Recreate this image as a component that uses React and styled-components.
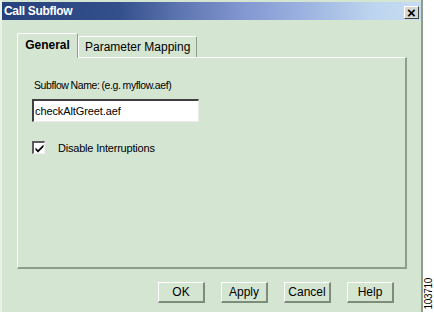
import React from 'react';
import styled, { createGlobalStyle } from 'styled-components';

const GlobalStyle = createGlobalStyle`
    html, body {
        margin: 0;
        padding: 0;
        background: #ffffff;
    }
    body {
        font-family: "Liberation Sans", Arial, sans-serif;
        font-size: 12px;
        color: #000;
    }
`;

function App() {
    return (
        <Page>
            <GlobalStyle />
            <Dialog>
                <TitleBar>
                    <Title>Call Subflow</Title>
                    <CloseButton>×</CloseButton>
                </TitleBar>

                <Body>
                    <Tabs>
                        <Tab active>General</Tab>
                        <Tab>Parameter Mapping</Tab>
                    </Tabs>

                    <Panel>
                        <Label>Subflow Name: (e.g. myflow.aef)</Label>
                        <TextInput>checkAltGreet.aef</TextInput>

                        <CheckRow>
                            <CheckBox>
                                <svg width="9" height="9" viewBox="0 0 9 9">
                                    <path d="M0.5 3.5 L3 6 L8.5 0.5 L8.5 3 L3 8.5 L0.5 6 Z" fill="#000" />
                                </svg>
                            </CheckBox>
                            <span>Disable Interruptions</span>
                        </CheckRow>
                    </Panel>

                    <ButtonRow>
                        <Button>OK</Button>
                        <Button>Apply</Button>
                        <Button>Cancel</Button>
                        <Button>Help</Button>
                    </ButtonRow>
                </Body>
            </Dialog>

            <Side>
                <FigureId>103710</FigureId>
            </Side>
        </Page>
    );
}

export default App;


const Page = styled.div`
    display: flex;
    width: 434px;
    height: 312px;
    overflow: hidden;
`;

const Dialog = styled.div`
    box-sizing: border-box;
    width: 423px;
    height: 312px;
    background: #d4e5d2;
    border-left: 2px solid #e8f2e6;
    border-right: 2px solid #8e9e8c;
    padding-top: 2px;
    display: flex;
    flex-direction: column;
`;

const TitleBar = styled.div`
    height: 18px;
    display: flex;
    align-items: center;
    justify-content: space-between;
    padding: 0 2px 0 2px;
    background: linear-gradient(to right, #26417c 0%, #34508c 28%, #5c74b0 42%, #8498d2 58%, #9cb2e0 72%, #bcd4ee 88%, #c6dcf2 100%);
`;

const Title = styled.span`
    color: #ffffff;
    font-weight: bold;
    font-size: 12px;
    letter-spacing: -0.3px;
`;

const CloseButton = styled.div`
    box-sizing: border-box;
    width: 15px;
    height: 13px;
    margin-top: 3px;
    background: #d4d8d0;
    border-top: 1px solid #ffffff;
    border-left: 1px solid #ffffff;
    border-right: 1px solid #404040;
    border-bottom: 1px solid #404040;
    display: flex;
    align-items: center;
    justify-content: center;
    font-weight: bold;
    font-size: 15px;
    line-height: 1;
`;

const Body = styled.div`
    display: flex;
    flex-direction: column;
    padding: 13px 14px 0 15px;
`;

const Tabs = styled.div`
    display: flex;
    align-items: flex-end;
    height: 25px;
    position: relative;
    z-index: 1;
    margin-bottom: -1px;
`;

const Tab = styled.div`
    box-sizing: border-box;
    height: ${p => (p.active ? '25px' : '21px')};
    padding: ${p => (p.active ? '0 7px' : '0 6px')};
    width: ${p => (p.active ? '61px' : 'auto')};
    display: flex;
    align-items: center;
    justify-content: center;
    background: #d4e5d2;
    font-weight: ${p => (p.active ? 'bold' : 'normal')};
    font-size: 12px;
    border-top: 1px solid #ffffff;
    border-left: 1px solid #ffffff;
    border-right: 1px solid #8e9e8c;
    margin-bottom: ${p => (p.active ? '0' : '1px')};
    padding-bottom: ${p => (p.active ? '3px' : '0')};
    border-radius: 2px 2px 0 0;
`;

const Panel = styled.div`
    box-sizing: border-box;
    width: 390px;
    height: 212px;
    border-top: 1px solid #ffffff;
    border-left: 1px solid #ffffff;
    border-right: 2px solid #8e9e8c;
    border-bottom: 2px solid #8e9e8c;
    padding: 20px 0 0 14px;
    display: flex;
    flex-direction: column;
`;

const Label = styled.div`
    font-size: 10.5px;
    letter-spacing: -0.4px;
    word-spacing: -0.5px;
    padding-left: 2px;
    height: 14px;
    line-height: 14px;
`;

const TextInput = styled.div`
    box-sizing: border-box;
    width: 167px;
    height: 23px;
    margin-top: 7px;
    background: #ffffff;
    border-top: 2px solid #404040;
    border-left: 2px solid #404040;
    border-right: 1px solid #e8eee6;
    border-bottom: 1px solid #e8eee6;
    padding-left: 1px;
    display: flex;
    align-items: center;
    font-size: 11px;
    letter-spacing: -0.1px;
`;

const CheckRow = styled.div`
    display: flex;
    align-items: center;
    margin-top: 19px;
    gap: 13px;
    font-size: 11px;
    letter-spacing: -0.2px;
`;

const CheckBox = styled.div`
    box-sizing: border-box;
    width: 13px;
    height: 13px;
    background: #ffffff;
    border-top: 2px solid #5a5a5a;
    border-left: 2px solid #5a5a5a;
    border-right: 1px solid #f0f0f0;
    border-bottom: 1px solid #f0f0f0;
    display: flex;
    align-items: center;
    justify-content: center;
`;

const ButtonRow = styled.div`
    display: flex;
    justify-content: flex-end;
    gap: 16px;
    margin-top: 13px;
    padding-right: 13px;
`;

const Button = styled.div`
    box-sizing: border-box;
    width: 47px;
    height: 21px;
    background: #d4e5d2;
    border-top: 1px solid #ffffff;
    border-left: 1px solid #ffffff;
    border-right: 2px solid #7e8c7c;
    border-bottom: 2px solid #7e8c7c;
    display: flex;
    align-items: center;
    justify-content: center;
    font-size: 12px;
`;

const Side = styled.div`
    flex: 1;
    display: flex;
    align-items: flex-end;
    justify-content: center;
    padding-bottom: 2px;
`;

const FigureId = styled.div`
    writing-mode: vertical-rl;
    transform: rotate(180deg);
    font-size: 10px;
    letter-spacing: -0.3px;
`;
